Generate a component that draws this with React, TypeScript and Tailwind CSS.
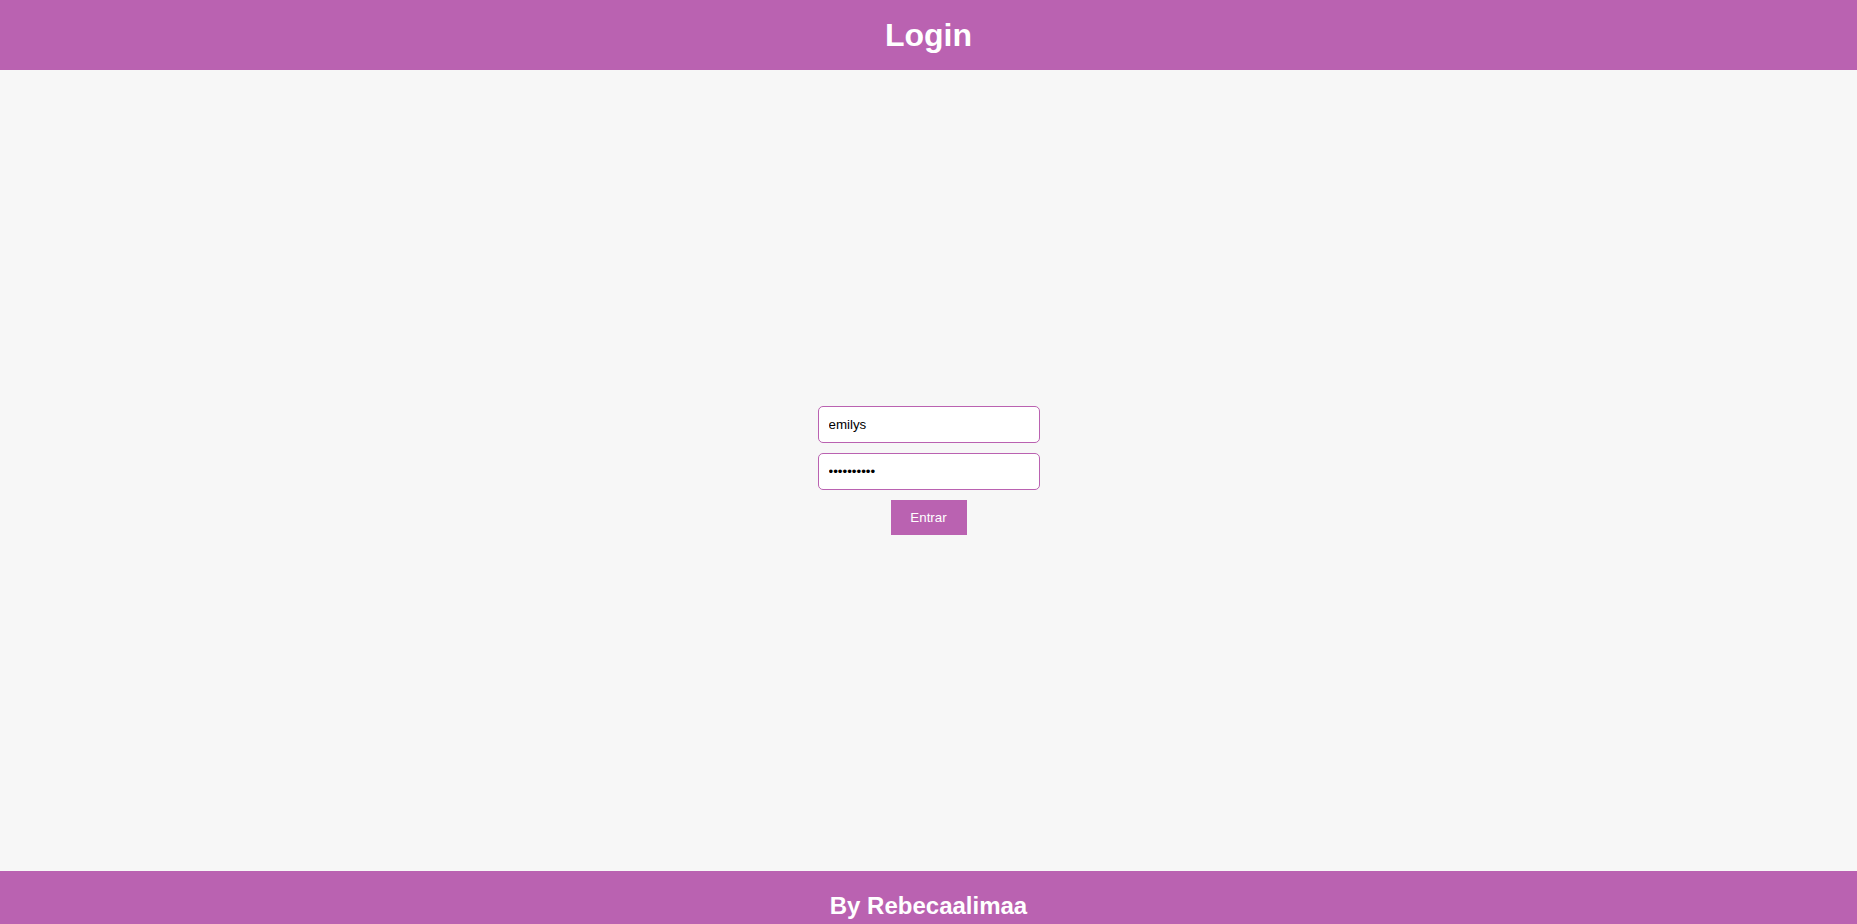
import React from 'react';

const App: React.FC = () => {
  const [username, setUsername] = React.useState('emilys');
  const [password, setPassword] = React.useState('emilyspass');

  return (
    <div className="flex min-h-screen flex-col bg-[#f7f7f7] font-['Liberation_Sans',Arial,sans-serif]">
      <header className="flex h-[70px] shrink-0 items-center justify-center bg-[#ba62b1]">
        <h1 className="text-[32px] font-bold text-white">Login</h1>
      </header>

      <main className="flex h-[801px] shrink-0 items-center justify-center">
        <form
          className="flex flex-col items-center gap-[10px]"
          onSubmit={(e) => e.preventDefault()}
        >
          <input
            value={username}
            onChange={(e) => setUsername(e.target.value)}
            className="h-[37px] w-[222px] rounded-[5px] border border-[#ba62b1] bg-white px-[10px] text-[13.33px] text-black outline-none"
          />
          <input
            type="password"
            value={password}
            onChange={(e) => setPassword(e.target.value)}
            className="h-[37px] w-[222px] rounded-[5px] border border-[#ba62b1] bg-white px-[10px] text-[13.33px] text-black outline-none"
          />
          <button
            type="submit"
            className="h-[35px] w-[76px] bg-[#ba62b1] text-[13.33px] text-white"
          >
            Entrar
          </button>
        </form>
      </main>

      <footer className="flex h-[70px] shrink-0 items-center justify-center bg-[#ba62b1]">
        <h2 className="text-[24px] font-bold text-white">By Rebecaalimaa</h2>
      </footer>
    </div>
  );
};

export default App;
